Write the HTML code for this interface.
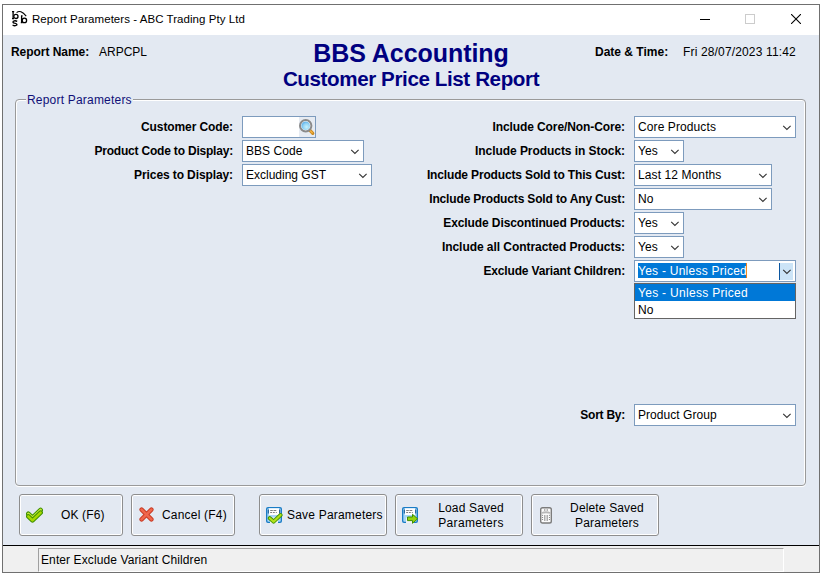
<!DOCTYPE html>
<html><head><meta charset="utf-8">
<style>
*{margin:0;padding:0;box-sizing:border-box}
html,body{width:824px;height:576px;overflow:hidden;background:#fff;font-family:"Liberation Sans",sans-serif;font-size:12px;color:#000}
.a{position:absolute}
#win{position:absolute;left:2px;top:4px;width:818px;height:569px;border:1px solid #707070;background:#fff}
#body{position:absolute;left:3px;top:35px;width:816px;height:510px;background:#e3e9f2}
#sbar{position:absolute;left:3px;top:545px;width:816px;height:27px;background:#f0f0f0;border-top:1px solid #000}
.lb{position:absolute;font-weight:bold;white-space:nowrap;line-height:14px;text-align:right}
.L{left:0;width:233px}
.R{left:300px;width:325px}
.tx{position:absolute;white-space:nowrap;line-height:14px}
.cb{position:absolute;height:22px;border:1px solid #7d9bbd;background:#fff}
.cb span{position:absolute;left:3px;top:3px;line-height:14px;white-space:nowrap;letter-spacing:0.1px}
.cb svg{position:absolute;right:4px;top:8px}
.btn{position:absolute;top:494px;height:42px;border:1px solid #8e8e8e;border-radius:3px;background:#e3e9f2;box-shadow:inset 0 0 0 1px #fff}
.btn span{position:absolute;white-space:nowrap;line-height:15px;letter-spacing:0.15px}
.btn .c{text-align:center;width:200px}
</style></head><body>
<div id="win"></div>
<!-- title bar -->
<svg class="a" style="left:10px;top:9px" width="20" height="18" viewBox="0 0 20 18">
 <g fill="none" stroke="#000">
  <path d="M2 2.6h2.2M3.1 2.6v7M2 9.6h2.2" stroke-width="1.3"/>
  <circle cx="5.9" cy="7.4" r="2.1" stroke-width="1.3"/>
  <path d="M11 6.8h1.6M11.6 6.8v6.8M10.8 13.6h1.8" stroke-width="1.3"/>
  <circle cx="14.4" cy="11.4" r="2.2" stroke-width="1.3"/>
  <path d="M6.6 3.6Q10.5 0.2 16.2 7.2" stroke-width="1.1"/>
  <path d="M7.2 12.4Q5.2 11.2 3.4 12.2Q2.2 13.5 4.5 14.2Q7.4 14.8 6.8 16.1Q5.2 17.4 2.6 16.2" stroke-width="1.3"/>
 </g>
</svg>
<div class="tx" style="left:32px;top:12px;font-size:11.5px;letter-spacing:0.05px">Report Parameters - ABC Trading Pty Ltd</div>
<div class="a" style="left:700px;top:19px;width:10px;height:1px;background:#000"></div>
<div class="a" style="left:745px;top:14px;width:10px;height:10px;border:1px solid #ccc"></div>
<svg class="a" style="left:791px;top:14px" width="10" height="10" viewBox="0 0 10 10"><path d="M0 0L10 10M10 0L0 10" stroke="#000" stroke-width="1.1"/></svg>

<div id="body"></div>
<div class="lb" style="left:11px;top:45px;text-align:left;letter-spacing:-0.05px">Report Name:</div>
<div class="tx" style="left:99px;top:45px">ARPCPL</div>
<div class="a" style="left:211px;top:39px;width:400px;text-align:center;font-weight:bold;font-size:25px;line-height:28px;color:#000080;letter-spacing:-0.05px">BBS Accounting</div>
<div class="a" style="left:211px;top:67px;width:400px;text-align:center;font-weight:bold;font-size:20.6px;line-height:24px;color:#000080;letter-spacing:-0.4px">Customer Price List Report</div>
<div class="lb" style="left:595px;top:45px;text-align:left">Date &amp; Time:</div>
<div class="tx" style="left:683px;top:45px;letter-spacing:0.15px">Fri 28/07/2023 11:42</div>

<!-- group box -->
<div class="a" style="left:15px;top:99px;width:791px;height:387px;border:1px solid #9a9a9a;border-radius:4px;box-shadow:inset 1px 1px 0 #fff,inset -1px 0 0 #fff,0 1px 0 #fff"></div>
<div class="tx" style="left:26px;top:93px;padding:0 1px 0 1px;background:#e3e9f2;color:#101078;letter-spacing:0.2px">Report Parameters</div>

<!-- left column -->
<div class="lb L" style="top:120px;letter-spacing:-0.1px">Customer Code:</div>
<div class="lb L" style="top:144px;letter-spacing:-0.2px">Product Code to Display:</div>
<div class="lb L" style="top:168px;letter-spacing:-0.1px">Prices to Display:</div>

<div class="cb" style="left:242px;top:116px;width:74px">
 <div class="a" style="left:56px;top:0;width:16px;height:20px;background:#e6ebf2"></div>
 <svg class="a" style="left:55px;top:0px" width="19" height="20" viewBox="0 0 19 20">
  <defs><radialGradient id="mg" cx="0.6" cy="0.65" r="0.7"><stop offset="0" stop-color="#c8f2fc"/><stop offset="0.6" stop-color="#8fd0f4"/><stop offset="1" stop-color="#4aa6e8"/></radialGradient></defs>
  <path d="M11.3 12.6L14.8 16.3" stroke="#c98a20" stroke-width="3.2" stroke-linecap="round"/>
  <path d="M11.8 13.2L14.2 15.7" stroke="#f5b040" stroke-width="1.6" stroke-linecap="round"/>
  <circle cx="7.7" cy="8.7" r="5.7" fill="#fff" stroke="#8a8a8a" stroke-width="2"/>
  <circle cx="7.7" cy="8.7" r="4.3" fill="url(#mg)"/>
 </svg>
</div>
<div class="cb" style="left:242px;top:140px;width:122px"><span style="letter-spacing:0.05px">BBS Code</span><svg width="9" height="6" viewBox="0 0 9 6"><path d="M1.2 0.9L4.9 4.5L8.6 0.9" fill="none" stroke="#333" stroke-width="1.1"/></svg></div>
<div class="cb" style="left:242px;top:164px;width:130px"><span style="letter-spacing:0">Excluding GST</span><svg width="9" height="6" viewBox="0 0 9 6"><path d="M1.2 0.9L4.9 4.5L8.6 0.9" fill="none" stroke="#333" stroke-width="1.1"/></svg></div>

<!-- right column -->
<div class="lb R" style="top:120px;letter-spacing:-0.1px">Include Core/Non-Core:</div>
<div class="lb R" style="top:144px;letter-spacing:-0.05px">Include Products in Stock:</div>
<div class="lb R" style="top:168px;letter-spacing:-0.15px">Include Products Sold to This Cust:</div>
<div class="lb R" style="top:192px;letter-spacing:-0.15px">Include Products Sold to Any Cust:</div>
<div class="lb R" style="top:216px;letter-spacing:-0.1px">Exclude Discontinued Products:</div>
<div class="lb R" style="top:240px;letter-spacing:-0.05px">Include all Contracted Products:</div>
<div class="lb R" style="top:264px;letter-spacing:-0.15px">Exclude Variant Children:</div>
<div class="lb R" style="top:408px;letter-spacing:-0.25px">Sort By:</div>

<div class="cb" style="left:634px;top:116px;width:162px"><span>Core Products</span><svg width="9" height="6" viewBox="0 0 9 6"><path d="M1.2 0.9L4.9 4.5L8.6 0.9" fill="none" stroke="#333" stroke-width="1.1"/></svg></div>
<div class="cb" style="left:634px;top:140px;width:50px"><span>Yes</span><svg width="9" height="6" viewBox="0 0 9 6"><path d="M1.2 0.9L4.9 4.5L8.6 0.9" fill="none" stroke="#333" stroke-width="1.1"/></svg></div>
<div class="cb" style="left:634px;top:164px;width:138px"><span>Last 12 Months</span><svg width="9" height="6" viewBox="0 0 9 6"><path d="M1.2 0.9L4.9 4.5L8.6 0.9" fill="none" stroke="#333" stroke-width="1.1"/></svg></div>
<div class="cb" style="left:634px;top:188px;width:138px"><span>No</span><svg width="9" height="6" viewBox="0 0 9 6"><path d="M1.2 0.9L4.9 4.5L8.6 0.9" fill="none" stroke="#333" stroke-width="1.1"/></svg></div>
<div class="cb" style="left:634px;top:212px;width:50px"><span>Yes</span><svg width="9" height="6" viewBox="0 0 9 6"><path d="M1.2 0.9L4.9 4.5L8.6 0.9" fill="none" stroke="#333" stroke-width="1.1"/></svg></div>
<div class="cb" style="left:634px;top:236px;width:50px"><span>Yes</span><svg width="9" height="6" viewBox="0 0 9 6"><path d="M1.2 0.9L4.9 4.5L8.6 0.9" fill="none" stroke="#333" stroke-width="1.1"/></svg></div>
<div class="cb" style="left:634px;top:260px;width:162px">
 <div class="a" style="left:3px;top:2px;width:109px;height:15px;background:#0078d7"></div>
 <div class="a" style="left:111px;top:2px;width:1px;height:15px;background:#f08020"></div>
 <span style="color:#fff;top:3px;letter-spacing:0.25px">Yes - Unless Priced</span>
 <div class="a" style="left:144px;top:2px;width:1px;height:17px;background:#0b56a0"></div>
 <div class="a" style="left:145px;top:2px;width:13px;height:17px;background:#cce4f7"></div>
 <svg width="9" height="6" viewBox="0 0 9 6"><path d="M1.2 0.9L4.9 4.5L8.6 0.9" fill="none" stroke="#333" stroke-width="1.1"/></svg>
</div>
<div class="a" style="left:634px;top:283px;width:162px;height:36px;border:1px solid #646464;background:#fff">
 <div class="a" style="left:0;top:0;width:160px;height:17px;background:#0078d7"></div>
 <div class="tx" style="left:3px;top:2px;color:#fff;letter-spacing:0.3px">Yes - Unless Priced</div>
 <div class="tx" style="left:3px;top:19px">No</div>
</div>
<div class="cb" style="left:634px;top:404px;width:162px"><span style="letter-spacing:0.05px">Product Group</span><svg width="9" height="6" viewBox="0 0 9 6"><path d="M1.2 0.9L4.9 4.5L8.6 0.9" fill="none" stroke="#333" stroke-width="1.1"/></svg></div>

<!-- buttons -->
<div class="btn" style="left:19px;width:104px">
 <svg class="a" style="left:6px;top:12px" width="17" height="17" viewBox="0 0 17 17">
  <path d="M2.3 6.8L6.5 10.6L14.6 3" fill="none" stroke="#3f9000" stroke-width="4.6" stroke-linejoin="round" stroke-linecap="round"/>
  <path d="M2.3 6.8L6.5 10.6L14.6 3" fill="none" stroke="#c6ea3a" stroke-width="2.6" stroke-linejoin="round" stroke-linecap="round"/>
  <path d="M2.3 9.4L6.5 13.4L14.6 5.6" fill="none" stroke="#3f9000" stroke-width="4.6" stroke-linejoin="round" stroke-linecap="round"/>
  <path d="M2.3 9.4L6.5 13.4L14.6 5.6" fill="none" stroke="#a6d800" stroke-width="2.6" stroke-linejoin="round" stroke-linecap="round"/>
 </svg>
 <span style="left:41px;top:13px">OK (F6)</span>
</div>
<div class="btn" style="left:131px;width:104px">
 <svg class="a" style="left:7px;top:12px" width="16" height="16" viewBox="0 0 16 16">
  <path d="M2.6 2.6L12.4 12.4M12.4 2.6L2.6 12.4" stroke="#c83a24" stroke-width="4.4" stroke-linecap="round"/>
  <path d="M2.6 2.6L12.4 12.4M12.4 2.6L2.6 12.4" stroke="#f0664c" stroke-width="2.6" stroke-linecap="round"/>
 </svg>
 <span style="left:30px;top:13px;letter-spacing:0.2px">Cancel (F4)</span>
</div>
<div class="btn" style="left:259px;width:128px">
 <svg class="a" style="left:6px;top:12px" width="17" height="17" viewBox="0 0 17 17">
  <rect x="0" y="0" width="16" height="16" rx="2" fill="#1a7cc6"/>
  <rect x="1.3" y="1.3" width="13.4" height="13.4" rx="1" fill="#a9d6f6"/>
  <rect x="3" y="1.3" width="10" height="6.7" fill="#fff"/>
  <path d="M2.3 2.5v4M13.7 2.5v4" stroke="#0d4f8a" stroke-width="1"/>
  <path d="M4.2 3.5h2.6M7.5 3.5h2.8M4.2 5.5h1.8M6.8 5.5h2M9.8 5.5h1" stroke="#808080" stroke-width="1"/>
  <rect x="4" y="10.5" width="8" height="5.5" fill="#f2f2f2"/>
  <path d="M3.8 11.2L7.6 14.6L14.6 8" fill="none" stroke="#3e9200" stroke-width="4" stroke-linejoin="round" stroke-linecap="round"/>
  <path d="M3.8 11.2L7.6 14.6L14.6 8" fill="none" stroke="#b2e01a" stroke-width="2.2" stroke-linejoin="round" stroke-linecap="round"/>
 </svg>
 <span style="left:27px;top:13px;letter-spacing:0.2px">Save Parameters</span>
</div>
<div class="btn" style="left:395px;width:128px">
 <svg class="a" style="left:6px;top:12px" width="17" height="17" viewBox="0 0 17 17">
  <rect x="0" y="0" width="16" height="16" rx="2" fill="#1a7cc6"/>
  <rect x="1.3" y="1.3" width="13.4" height="13.4" rx="1" fill="#a9d6f6"/>
  <rect x="3" y="1.3" width="10" height="6.7" fill="#fff"/>
  <path d="M2.3 2.5v4M13.7 2.5v4" stroke="#0d4f8a" stroke-width="1"/>
  <path d="M4.2 3.5h2.6M7.5 3.5h2.8M4.2 5.5h1.8M6.8 5.5h2M9.8 5.5h1" stroke="#808080" stroke-width="1"/>
  <rect x="4" y="10.5" width="8" height="5.5" fill="#f2f2f2"/>
  <path d="M5.5 10h5V7.3L15.6 11.8L10.5 16.3V13.6H5.5Z" fill="#96d20e" stroke="#3f8f00" stroke-width="1"/>
 </svg>
 <span class="c" style="left:-25px;top:6px">Load Saved<br><span style="position:static;letter-spacing:0.35px">Parameters</span></span>
</div>
<div class="btn" style="left:531px;width:128px">
 <svg class="a" style="left:8px;top:12px" width="12" height="17" viewBox="0 0 12 17">
  <rect x="0.7" y="0.7" width="10.6" height="15.3" rx="1.8" fill="#fbfbfb" stroke="#7c7c7c" stroke-width="1.4"/>
  <path d="M1.5 5.2Q6 3.2 10.5 5.2V6.8Q6 5.6 1.5 6.8Z" fill="#b8b8b8"/>
  <g fill="#6a6a6a"><circle cx="4.8" cy="3" r=".65"/><circle cx="7.2" cy="3" r=".65"/>
  <circle cx="4.8" cy="9" r=".75"/><circle cx="7.2" cy="9" r=".75"/><circle cx="4.8" cy="11" r=".75"/><circle cx="7.2" cy="11" r=".75"/><circle cx="4.8" cy="13" r=".75"/><circle cx="7.2" cy="13" r=".75"/>
  <circle cx="2.6" cy="8.2" r=".55"/><circle cx="9.4" cy="8.2" r=".55"/><circle cx="2.6" cy="10.5" r=".55"/><circle cx="9.4" cy="10.5" r=".55"/><circle cx="2.6" cy="12.5" r=".55"/><circle cx="9.4" cy="12.5" r=".55"/></g>
 </svg>
 <span class="c" style="left:-25px;top:6px">Delete Saved<br><span style="position:static;letter-spacing:0.2px">Parameters</span></span>
</div>

<!-- status bar -->
<div id="sbar"></div>
<div class="a" style="left:38px;top:548px;width:746px;height:24px;border-left:1px solid #a0a0a0;border-top:1px solid #a0a0a0;border-right:1px solid #fff;border-bottom:1px solid #fff"></div>
<div class="tx" style="left:41px;top:553px;letter-spacing:0.1px">Enter Exclude Variant Children</div>
</body></html>
